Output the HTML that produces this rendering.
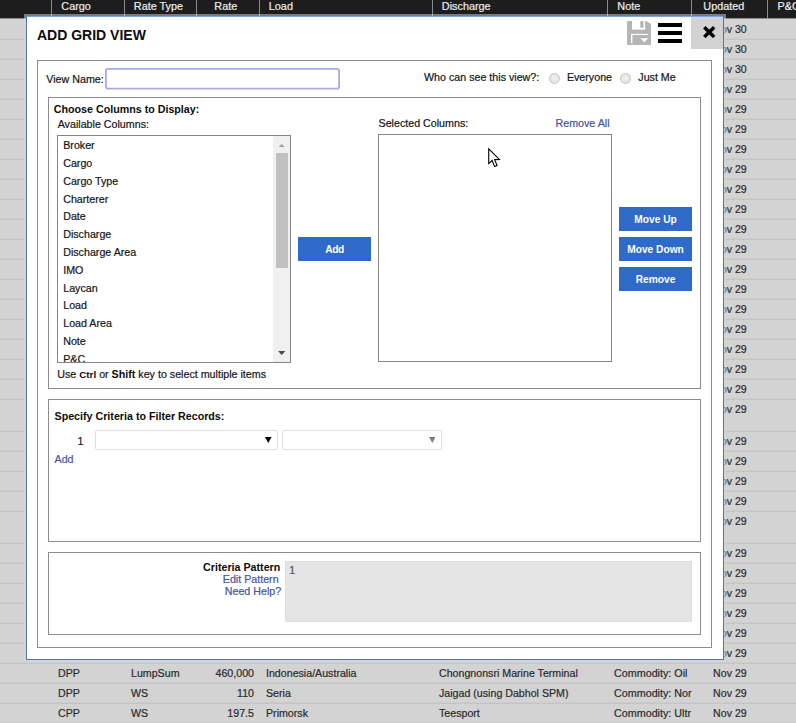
<!DOCTYPE html>
<html><head><meta charset="utf-8"><title>Add Grid View</title>
<style>
*{box-sizing:border-box;margin:0;padding:0}
html,body{width:796px;height:723px;overflow:hidden;background:#d3d3d3;font-family:"Liberation Sans",Arial,sans-serif;font-size:10.7px;color:#222}
.a{position:absolute}
.t{position:absolute;white-space:nowrap;color:#151515;-webkit-text-stroke:0.2px currentColor}
.b,.t b{font-weight:bold;color:#0c0c0c;-webkit-text-stroke:0}
.link{color:#44549a}
#hdr{position:absolute;left:0;top:0;width:796px;height:18px;background:#1d1d1d;box-shadow:0 1px 0 #909090}
#hdr .t{color:#ececec}
#hdr i{position:absolute;top:0;width:1px;height:18px;background:#8c8c8c}
.row{position:absolute;left:0;width:796px;border-bottom:1px solid #cdcdcd;box-shadow:0 1px 0 #c4c4c4}
.row .t{color:#2b2b2b}
#modal{position:absolute;left:26px;top:16px;width:698px;height:644px;background:#fff;border:1px solid #5a7499;border-top-color:#7fa3dc;box-shadow:0 0 0 2px rgba(205,216,238,.5)}
.box{position:absolute;border:1px solid #8c8c8c}
.btn{position:absolute;background:#2f6ac8;color:#fff;font-weight:bold;font-size:10.2px;text-align:center;width:73px}
.list{position:absolute;border:1px solid #868686;background:#fff;overflow:hidden}
.radio{position:absolute;width:11px;height:11px;border-radius:50%;border:1px solid #c3c3c3;background:radial-gradient(circle at 50% 45%,#f1f1f1 0,#dcdcdc 100%)}
</style></head><body>

<div id="hdr">
<div class="t " style="left:61.3px;top:-0.36px;font-size:10.85px;line-height:12px;">Cargo</div>
<div class="t " style="left:133.8px;top:-0.36px;font-size:10.85px;line-height:12px;">Rate Type</div>
<div class="t " style="left:214.3px;top:-0.36px;font-size:10.85px;line-height:12px;">Rate</div>
<div class="t " style="left:268.8px;top:-0.36px;font-size:10.85px;line-height:12px;">Load</div>
<div class="t " style="left:441.8px;top:-0.36px;font-size:10.85px;line-height:12px;">Discharge</div>
<div class="t " style="left:617.3px;top:-0.36px;font-size:10.85px;line-height:12px;">Note</div>
<div class="t " style="left:703.3px;top:-0.36px;font-size:10.85px;line-height:12px;">Updated</div>
<div class="t " style="left:777.5999999999999px;top:-0.36px;font-size:10.85px;line-height:12px;">P&amp;C</div>
<i style="left:51px"></i>
<i style="left:124px"></i>
<i style="left:196px"></i>
<i style="left:259px"></i>
<i style="left:432px"></i>
<i style="left:607px"></i>
<i style="left:691px"></i>
<i style="left:767px"></i>
</div>
<div class="row" style="top:19px;height:20px">
<div class="t " style="left:713.1px;top:3.73px;font-size:10.6px;line-height:12px;">Nov 30</div>
</div>
<div class="row" style="top:39px;height:20px">
<div class="t " style="left:713.1px;top:3.73px;font-size:10.6px;line-height:12px;">Nov 30</div>
</div>
<div class="row" style="top:59px;height:20px">
<div class="t " style="left:713.1px;top:3.73px;font-size:10.6px;line-height:12px;">Nov 30</div>
</div>
<div class="row" style="top:79px;height:20px">
<div class="t " style="left:713.1px;top:3.73px;font-size:10.6px;line-height:12px;">Nov 29</div>
</div>
<div class="row" style="top:99px;height:20px">
<div class="t " style="left:713.1px;top:3.73px;font-size:10.6px;line-height:12px;">Nov 29</div>
</div>
<div class="row" style="top:119px;height:20px">
<div class="t " style="left:713.1px;top:3.73px;font-size:10.6px;line-height:12px;">Nov 29</div>
</div>
<div class="row" style="top:139px;height:20px">
<div class="t " style="left:713.1px;top:3.73px;font-size:10.6px;line-height:12px;">Nov 29</div>
</div>
<div class="row" style="top:159px;height:20px">
<div class="t " style="left:713.1px;top:3.73px;font-size:10.6px;line-height:12px;">Nov 29</div>
</div>
<div class="row" style="top:179px;height:20px">
<div class="t " style="left:713.1px;top:3.73px;font-size:10.6px;line-height:12px;">Nov 29</div>
</div>
<div class="row" style="top:199px;height:20px">
<div class="t " style="left:713.1px;top:3.73px;font-size:10.6px;line-height:12px;">Nov 29</div>
</div>
<div class="row" style="top:219px;height:20px">
<div class="t " style="left:713.1px;top:3.73px;font-size:10.6px;line-height:12px;">Nov 29</div>
</div>
<div class="row" style="top:239px;height:20px">
<div class="t " style="left:713.1px;top:3.73px;font-size:10.6px;line-height:12px;">Nov 29</div>
</div>
<div class="row" style="top:259px;height:20px">
<div class="t " style="left:713.1px;top:3.73px;font-size:10.6px;line-height:12px;">Nov 29</div>
</div>
<div class="row" style="top:279px;height:20px">
<div class="t " style="left:713.1px;top:3.73px;font-size:10.6px;line-height:12px;">Nov 29</div>
</div>
<div class="row" style="top:299px;height:20px">
<div class="t " style="left:713.1px;top:3.73px;font-size:10.6px;line-height:12px;">Nov 29</div>
</div>
<div class="row" style="top:319px;height:20px">
<div class="t " style="left:713.1px;top:3.73px;font-size:10.6px;line-height:12px;">Nov 29</div>
</div>
<div class="row" style="top:339px;height:20px">
<div class="t " style="left:713.1px;top:3.73px;font-size:10.6px;line-height:12px;">Nov 29</div>
</div>
<div class="row" style="top:359px;height:20px">
<div class="t " style="left:713.1px;top:3.73px;font-size:10.6px;line-height:12px;">Nov 29</div>
</div>
<div class="row" style="top:379px;height:20px">
<div class="t " style="left:713.1px;top:3.73px;font-size:10.6px;line-height:12px;">Nov 29</div>
</div>
<div class="row" style="top:399px;height:32px">
<div class="t " style="left:713.1px;top:3.73px;font-size:10.6px;line-height:12px;">Nov 29</div>
</div>
<div class="row" style="top:431px;height:20px">
<div class="t " style="left:713.1px;top:3.73px;font-size:10.6px;line-height:12px;">Nov 29</div>
</div>
<div class="row" style="top:451px;height:20px">
<div class="t " style="left:713.1px;top:3.73px;font-size:10.6px;line-height:12px;">Nov 29</div>
</div>
<div class="row" style="top:471px;height:20px">
<div class="t " style="left:713.1px;top:3.73px;font-size:10.6px;line-height:12px;">Nov 29</div>
</div>
<div class="row" style="top:491px;height:20px">
<div class="t " style="left:713.1px;top:3.73px;font-size:10.6px;line-height:12px;">Nov 29</div>
</div>
<div class="row" style="top:511px;height:32px">
<div class="t " style="left:713.1px;top:3.73px;font-size:10.6px;line-height:12px;">Nov 29</div>
</div>
<div class="row" style="top:543px;height:20px">
<div class="t " style="left:713.1px;top:3.73px;font-size:10.6px;line-height:12px;">Nov 29</div>
</div>
<div class="row" style="top:563px;height:20px">
<div class="t " style="left:713.1px;top:3.73px;font-size:10.6px;line-height:12px;">Nov 29</div>
</div>
<div class="row" style="top:583px;height:20px">
<div class="t " style="left:713.1px;top:3.73px;font-size:10.6px;line-height:12px;">Nov 29</div>
</div>
<div class="row" style="top:603px;height:20px">
<div class="t " style="left:713.1px;top:3.73px;font-size:10.6px;line-height:12px;">Nov 29</div>
</div>
<div class="row" style="top:623px;height:20px">
<div class="t " style="left:713.1px;top:3.73px;font-size:10.6px;line-height:12px;">Nov 29</div>
</div>
<div class="row" style="top:643px;height:20px">
<div class="t " style="left:713.1px;top:3.73px;font-size:10.6px;line-height:12px;">Nov 29</div>
</div>
<div class="row" style="top:663px;height:20px">
<div class="t " style="left:58px;top:3.71px;font-size:10.65px;line-height:12px;">DPP</div>
<div class="t " style="left:131px;top:3.71px;font-size:10.65px;line-height:12px;">LumpSum</div>
<div class="t " style="right:542px;top:3.71px;font-size:10.65px;line-height:12px;">460,000</div>
<div class="t " style="left:266px;top:3.71px;font-size:10.65px;line-height:12px;">Indonesia/Australia</div>
<div class="t " style="left:439px;top:3.71px;font-size:10.65px;line-height:12px;">Chongnonsri Marine Terminal</div>
<div class="t " style="left:614px;top:3.68px;font-size:10.75px;line-height:12px;width:77.5px;overflow:hidden">Commodity: Oil</div>
<div class="t " style="left:713.1px;top:3.73px;font-size:10.6px;line-height:12px;">Nov 29</div>
</div>
<div class="row" style="top:683px;height:20px">
<div class="t " style="left:58px;top:3.71px;font-size:10.65px;line-height:12px;">DPP</div>
<div class="t " style="left:131px;top:3.71px;font-size:10.65px;line-height:12px;">WS</div>
<div class="t " style="right:542px;top:3.71px;font-size:10.65px;line-height:12px;">110</div>
<div class="t " style="left:266px;top:3.71px;font-size:10.65px;line-height:12px;">Seria</div>
<div class="t " style="left:439px;top:3.71px;font-size:10.65px;line-height:12px;">Jaigad (using Dabhol SPM)</div>
<div class="t " style="left:614px;top:3.68px;font-size:10.75px;line-height:12px;width:77.5px;overflow:hidden">Commodity: Nor</div>
<div class="t " style="left:713.1px;top:3.73px;font-size:10.6px;line-height:12px;">Nov 29</div>
</div>
<div class="row" style="top:703px;height:20px">
<div class="t " style="left:58px;top:3.71px;font-size:10.65px;line-height:12px;">CPP</div>
<div class="t " style="left:131px;top:3.71px;font-size:10.65px;line-height:12px;">WS</div>
<div class="t " style="right:542px;top:3.71px;font-size:10.65px;line-height:12px;">197.5</div>
<div class="t " style="left:266px;top:3.71px;font-size:10.65px;line-height:12px;">Primorsk</div>
<div class="t " style="left:439px;top:3.71px;font-size:10.65px;line-height:12px;">Teesport</div>
<div class="t " style="left:614px;top:3.68px;font-size:10.75px;line-height:12px;width:77.5px;overflow:hidden">Commodity: Ultr</div>
<div class="t " style="left:713.1px;top:3.73px;font-size:10.6px;line-height:12px;">Nov 29</div>
</div>
<div id="modal"></div>
<svg class="a" style="left:626.75px;top:21px" width="24.5" height="24" viewBox="0 0 24.5 24"><path d="M0 1 a1 1 0 0 1 1-1 h18 l5.5 3.4 v19.6 a1 1 0 0 1-1 1 h-22.5 a1 1 0 0 1-1-1z" fill="#b5b5b5"/><rect x="5" y="0" width="13.1" height="8.6" fill="#fff"/><rect x="13.3" y="0" width="3.2" height="6.8" fill="#b5b5b5"/><rect x="4" y="12.9" width="17.3" height="1.1" fill="#fff"/><rect x="4" y="12.9" width="1.4" height="9.4" fill="#fff"/><path d="M13.3 17.2 h8 l-4 4.1z" fill="#fff"/></svg>
<div class="a" style="left:658px;top:23px;width:24px;height:4px;background:#000"></div>
<div class="a" style="left:658px;top:31px;width:24px;height:4px;background:#000"></div>
<div class="a" style="left:658px;top:39px;width:24px;height:4px;background:#000"></div>
<div class="a" style="left:691px;top:17px;width:32px;height:31.5px;background:linear-gradient(#c9d6ec 0,#c9d6ec 2px,#d2d2d2 2px)"></div>
<svg class="a" style="left:703px;top:26.2px" width="12.5" height="12.2" viewBox="0 0 12.5 12.5" preserveAspectRatio="none"><path d="M1.3 1.3 L11.2 11.2 M11.2 1.3 L1.3 11.2" stroke="#000" stroke-width="3.5"/></svg>

<div class="t b" style="left:37px;top:27.35px;font-size:14px;line-height:16px;">ADD GRID VIEW</div>
<div class="box" style="left:37px;top:60px;width:675px;height:588px"></div>
<div class="t " style="left:46.3px;top:73.19px;font-size:10.7px;line-height:12px;">View Name:</div>
<svg class="a" style="left:104px;top:67px" width="238" height="24" viewBox="0 0 238 24"><rect x="1.9" y="1.8" width="233.2" height="19.9" rx="2.2" fill="#fff" stroke="#a9a9e8" stroke-width="1.8"/></svg>
<div class="t " style="left:424px;top:70.69px;font-size:10.7px;line-height:12px;">Who can see this view?:</div>
<div class="radio" style="left:549px;top:73.3px"></div>
<div class="t " style="left:566.9px;top:70.69px;font-size:10.7px;line-height:12px;">Everyone</div>
<div class="radio" style="left:620.3px;top:73.3px"></div>
<div class="t " style="left:638.3px;top:70.69px;font-size:10.7px;line-height:12px;">Just Me</div>
<div class="box" style="left:48px;top:97px;width:653px;height:292px"></div>
<div class="t b" style="left:53.8px;top:103.29px;font-size:10.7px;line-height:12px;">Choose Columns to Display:</div>
<div class="t " style="left:57.7px;top:118.29px;font-size:10.7px;line-height:12px;">Available Columns:</div>
<div class="list" style="left:57px;top:135px;width:234px;height:228px">
<div class="t" style="left:5.2px;top:3.29px;line-height:12px">Broker</div>
<div class="t" style="left:5.2px;top:21.09px;line-height:12px">Cargo</div>
<div class="t" style="left:5.2px;top:38.89px;line-height:12px">Cargo Type</div>
<div class="t" style="left:5.2px;top:56.69px;line-height:12px">Charterer</div>
<div class="t" style="left:5.2px;top:74.49px;line-height:12px">Date</div>
<div class="t" style="left:5.2px;top:92.29px;line-height:12px">Discharge</div>
<div class="t" style="left:5.2px;top:110.09px;line-height:12px">Discharge Area</div>
<div class="t" style="left:5.2px;top:127.89px;line-height:12px">IMO</div>
<div class="t" style="left:5.2px;top:145.69px;line-height:12px">Laycan</div>
<div class="t" style="left:5.2px;top:163.49px;line-height:12px">Load</div>
<div class="t" style="left:5.2px;top:181.29px;line-height:12px">Load Area</div>
<div class="t" style="left:5.2px;top:199.09px;line-height:12px">Note</div>
<div class="t" style="left:5.2px;top:216.89px;line-height:12px">P&amp;C</div>
<div class="t" style="left:5.2px;top:234.69px;line-height:12px">Rate</div>
<div class="a" style="right:0;top:0;width:17px;height:226px;background:#f0f0f0"></div>
<div class="a" style="right:1.6px;top:17px;width:12.7px;height:115px;background:#c0c0c0"></div>
<svg class="a" style="right:4.4px;top:7.6px" width="7.4" height="3.7" viewBox="0 0 8 4.5" preserveAspectRatio="none"><path d="M0 4.5 L4 0 L8 4.5z" fill="#a0a0a0"/></svg>
<svg class="a" style="right:4.4px;top:215.4px" width="7.4" height="3.9" viewBox="0 0 8 4.5" preserveAspectRatio="none"><path d="M0 0 L4 4.5 L8 0z" fill="#4a4a4a"/></svg>
</div>
<div class="t " style="left:57.3px;top:367.99px;font-size:10.7px;line-height:12px;">Use <b style="font-size:9.8px">Ctrl</b> or <b>Shift</b> key to select multiple items</div>
<div class="btn" style="left:298px;top:237px;height:23.5px;line-height:25.7px;letter-spacing:-0.5px">Add</div>
<div class="t " style="left:378.5px;top:116.99px;font-size:10.7px;line-height:12px;">Selected Columns:</div>
<div class="t link" style="left:555.5px;top:116.99px;font-size:10.7px;line-height:12px;">Remove All</div>
<div class="list" style="left:378px;top:134px;width:234px;height:228px"></div>
<div class="btn" style="left:619px;top:207px;height:24px;line-height:26.1px">Move Up</div>
<div class="btn" style="left:619px;top:237px;height:24px;line-height:26.1px">Move Down</div>
<div class="btn" style="left:619px;top:267px;height:24px;line-height:26.1px">Remove</div>
<svg class="a" style="left:487.5px;top:147.5px" width="13" height="20" viewBox="0 0 13 20"><path d="M0.7 0.8 L0.7 15.6 L4.1 12.5 L6.6 18.6 L9.1 17.5 L6.6 11.6 L11.4 11.4z" fill="#fff" stroke="#000" stroke-width="1.1" stroke-linejoin="miter"/></svg>
<div class="box" style="left:48px;top:399px;width:653px;height:143px"></div>
<div class="t b" style="left:54.5px;top:410.19px;font-size:10.7px;line-height:12px;">Specify Criteria to Filter Records:</div>
<div class="t " style="left:77.5px;top:434.59px;font-size:10.7px;line-height:12px;">1</div>
<div class="a" style="left:94.5px;top:430px;width:183px;height:20px;border:1px solid #dfdfdf;border-radius:2px;background:#fff"></div>
<svg class="a" style="left:265px;top:436.6px" width="6.6" height="6" viewBox="0 0 6.6 6"><path d="M0 0 L6.6 0 L3.3 6z" fill="#000"/></svg>
<div class="a" style="left:282px;top:430px;width:159.5px;height:20px;border:1px solid #dfdfdf;border-radius:2px;background:#fff"></div>
<svg class="a" style="left:428.5px;top:436.6px" width="6.6" height="6" viewBox="0 0 6.6 6"><path d="M0 0 L6.6 0 L3.3 6z" fill="#7d7d7d"/></svg>
<div class="t link" style="left:54.5px;top:452.89px;font-size:10.7px;line-height:12px;">Add</div>
<div class="box" style="left:48px;top:552px;width:653px;height:83px"></div>
<div class="t b" style="right:515.7px;top:561.19px;font-size:10.7px;line-height:12px;">Criteria Pattern</div>
<div class="t link" style="right:517.4px;top:572.89px;font-size:10.7px;line-height:12px;">Edit Pattern</div>
<div class="t link" style="right:514.8px;top:584.59px;font-size:10.7px;line-height:12px;">Need Help?</div>
<div class="a" style="left:285px;top:560.5px;width:406.5px;height:61.5px;background:#e5e5e5;border:1px solid #dedede"></div>
<div class="t " style="left:289.3px;top:564.19px;font-size:10.7px;line-height:12px;color:#555">1</div>
</body></html>
